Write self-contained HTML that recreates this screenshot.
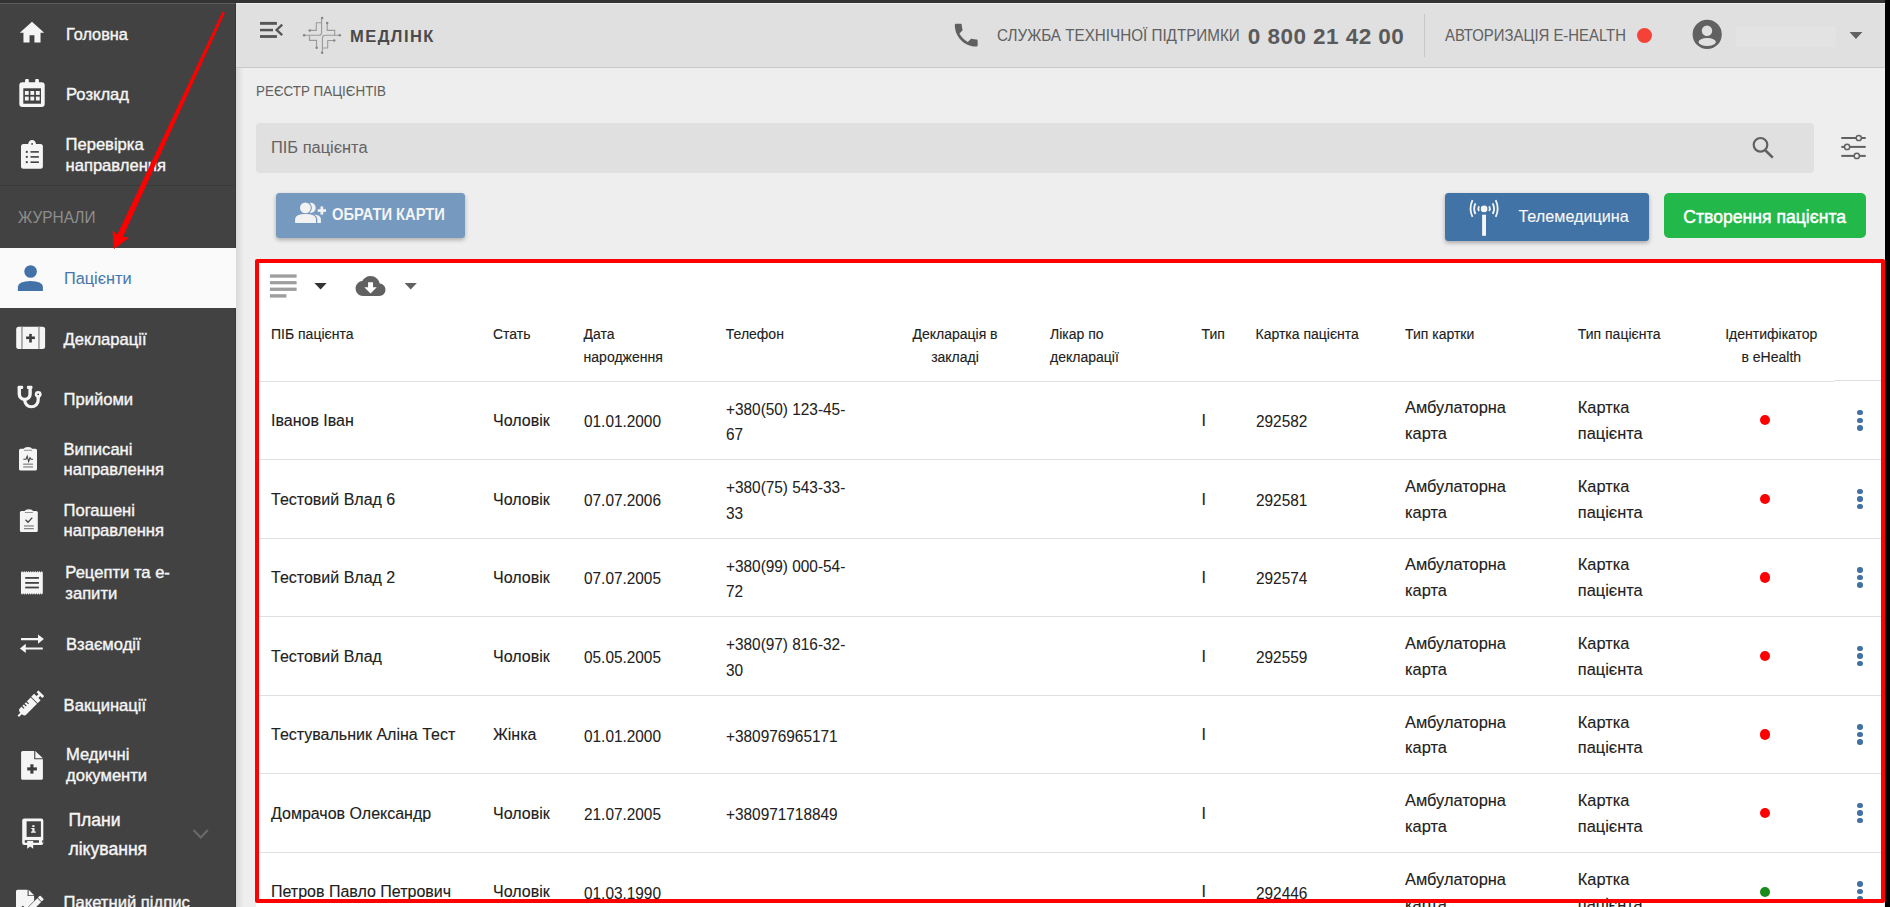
<!DOCTYPE html>
<html><head><meta charset="utf-8">
<style>
html,body{margin:0;padding:0;}
body{width:1890px;height:907px;overflow:hidden;position:relative;background:#eeeeee;font-family:"Liberation Sans",sans-serif;}
.t{position:absolute;white-space:nowrap;-webkit-text-stroke:0.12px currentColor;}
#top{position:absolute;left:0;top:0;width:1890px;height:3px;background:#333}
#sb{position:absolute;left:0;top:3px;width:236px;height:904px;background:#424242}
#hdr{position:absolute;left:236px;top:4px;width:1649px;height:63px;background:#e0e0e0;border-bottom:1px solid #c9c9c9}
#rb{position:absolute;left:1885px;top:0;width:5px;height:907px;background:#000}
</style></head><body>
<div id="top"></div>
<div id="hdr"></div>
<div id="sb">
<div style="position:absolute;left:0;top:0;width:236px;height:1px;background:#5e5e5e"></div>
<div style="position:absolute;left:235px;top:0;width:1px;height:904px;background:#393939"></div>
<div style="position:absolute;left:0;top:182px;width:235px;height:1px;background:#3a3a3a"></div>
</div>
<div class="t" style="left:66.00px;top:24.16px;font-size:16.3px;line-height:20.38px;color:#f5f5f5;-webkit-text-stroke:0.4px currentColor;">Головна</div>
<div class="t" style="left:66.00px;top:84.87px;font-size:16.6px;line-height:20.75px;color:#f5f5f5;-webkit-text-stroke:0.4px currentColor;">Розклад</div>
<div class="t" style="left:65.50px;top:134.87px;font-size:16.6px;line-height:20.75px;color:#f5f5f5;-webkit-text-stroke:0.4px currentColor;">Перевірка</div>
<div class="t" style="left:65.50px;top:155.87px;font-size:16.6px;line-height:20.75px;color:#f5f5f5;-webkit-text-stroke:0.4px currentColor;">направлення</div>
<div class="t" style="left:17.60px;top:206.97px;font-size:16.5px;line-height:20.62px;color:#8e8e8e;transform:scaleX(0.933);transform-origin:0 0;-webkit-text-stroke:0.05px currentColor;">ЖУРНАЛИ</div>
<div style="position:absolute;left:0;top:248px;width:236px;height:60px;background:#fafafa"></div>
<div class="t" style="left:64.00px;top:268.46px;font-size:16.3px;line-height:20.38px;color:#4677ab;-webkit-text-stroke:0.05px currentColor;">Пацієнти</div>
<div class="t" style="left:63.50px;top:329.87px;font-size:16.6px;line-height:20.75px;color:#f5f5f5;-webkit-text-stroke:0.4px currentColor;">Декларації</div>
<div class="t" style="left:63.50px;top:389.87px;font-size:16.6px;line-height:20.75px;color:#f5f5f5;-webkit-text-stroke:0.4px currentColor;">Прийоми</div>
<div class="t" style="left:63.50px;top:439.87px;font-size:16.6px;line-height:20.75px;color:#f5f5f5;-webkit-text-stroke:0.4px currentColor;">Виписані</div>
<div class="t" style="left:63.50px;top:459.87px;font-size:16.6px;line-height:20.75px;color:#f5f5f5;-webkit-text-stroke:0.4px currentColor;">направлення</div>
<div class="t" style="left:63.50px;top:500.87px;font-size:16.6px;line-height:20.75px;color:#f5f5f5;-webkit-text-stroke:0.4px currentColor;">Погашені</div>
<div class="t" style="left:63.50px;top:520.87px;font-size:16.6px;line-height:20.75px;color:#f5f5f5;-webkit-text-stroke:0.4px currentColor;">направлення</div>
<div class="t" style="left:65.30px;top:562.87px;font-size:16.6px;line-height:20.75px;color:#f5f5f5;-webkit-text-stroke:0.4px currentColor;">Рецепти та е-</div>
<div class="t" style="left:65.30px;top:583.87px;font-size:16.6px;line-height:20.75px;color:#f5f5f5;-webkit-text-stroke:0.4px currentColor;">запити</div>
<div class="t" style="left:66.00px;top:634.87px;font-size:16.6px;line-height:20.75px;color:#f5f5f5;-webkit-text-stroke:0.4px currentColor;">Взаємодії</div>
<div class="t" style="left:63.60px;top:695.87px;font-size:16.6px;line-height:20.75px;color:#f5f5f5;-webkit-text-stroke:0.4px currentColor;">Вакцинації</div>
<div class="t" style="left:66.00px;top:744.87px;font-size:16.6px;line-height:20.75px;color:#f5f5f5;-webkit-text-stroke:0.4px currentColor;">Медичні</div>
<div class="t" style="left:66.00px;top:765.87px;font-size:16.6px;line-height:20.75px;color:#f5f5f5;-webkit-text-stroke:0.4px currentColor;">документи</div>
<div class="t" style="left:68.40px;top:808.90px;font-size:17.6px;line-height:22.0px;color:#f5f5f5;-webkit-text-stroke:0.4px currentColor;">Плани</div>
<div class="t" style="left:68.40px;top:837.90px;font-size:17.6px;line-height:22.0px;color:#f5f5f5;-webkit-text-stroke:0.4px currentColor;">лікування</div>
<div class="t" style="left:63.60px;top:892.87px;font-size:16.6px;line-height:20.75px;color:#f5f5f5;-webkit-text-stroke:0.4px currentColor;">Пакетний підпис</div>
<div class="t" style="left:350.00px;top:25.57px;font-size:16.5px;line-height:20.62px;color:#4a4a4a;font-weight:700;letter-spacing:1.45px;-webkit-text-stroke:0px currentColor;">МЕДЛІНК</div>
<div class="t" style="left:996.70px;top:26.17px;font-size:16.6px;line-height:20.75px;color:#616161;transform:scaleX(0.917);transform-origin:0 0;-webkit-text-stroke:0.05px currentColor;">СЛУЖБА ТЕХНІЧНОЇ ПІДТРИМКИ</div>
<div class="t" style="left:1247.80px;top:23.04px;font-size:22.5px;line-height:28.12px;color:#5a5a5a;font-weight:700;letter-spacing:0.45px;-webkit-text-stroke:0px currentColor;">0 800 21 42 00</div>
<div style="position:absolute;left:1424px;top:14px;width:1px;height:43px;background:#c8c8c8"></div>
<div class="t" style="left:1444.80px;top:24.77px;font-size:16.4px;line-height:20.5px;color:#616161;transform:scaleX(0.908);transform-origin:0 0;-webkit-text-stroke:0.05px currentColor;">АВТОРИЗАЦІЯ E-HEALTH</div>
<div style="position:absolute;left:1636.7px;top:27.5px;width:15px;height:15px;border-radius:50%;background:#f44336"></div>
<div style="position:absolute;left:1736px;top:25.5px;width:100px;height:21.5px;background:#e3e3e3"></div>
<div style="position:absolute;left:236px;top:68px;width:8px;height:839px;background:linear-gradient(to right,rgba(0,0,0,0.09),rgba(0,0,0,0))"></div>
<div class="t" style="left:255.60px;top:81.34px;font-size:15.5px;line-height:19.38px;color:#606060;transform:scaleX(0.865);transform-origin:0 0;-webkit-text-stroke:0px currentColor;">РЕЄСТР ПАЦІЄНТІВ</div>
<div style="position:absolute;left:256px;top:123px;width:1558px;height:50px;background:#e0e0e0;border-radius:4px"></div>
<div class="t" style="left:271.00px;top:137.37px;font-size:16.4px;line-height:20.5px;color:#646464;-webkit-text-stroke:0.05px currentColor;">ПІБ пацієнта</div>
<div style="position:absolute;left:276px;top:193px;width:189px;height:44.5px;background:#7599bf;border-radius:3.5px;box-shadow:0 2px 4px rgba(0,0,0,.28)"></div>
<div class="t" style="left:331.80px;top:204.76px;font-size:16px;line-height:20.0px;color:#f4f4f4;font-weight:700;transform:scaleX(0.92);transform-origin:0 0;-webkit-text-stroke:0px currentColor;">ОБРАТИ КАРТИ</div>
<div style="position:absolute;left:1445px;top:193px;width:203.5px;height:47.5px;background:#4273a6;border-radius:3.5px;box-shadow:0 2px 4px rgba(0,0,0,.3)"></div>
<div class="t" style="left:1518.40px;top:206.46px;font-size:16.2px;line-height:20.25px;color:#f8f8f8;">Телемедицина</div>
<div style="position:absolute;left:1664px;top:193px;width:201.6px;height:45px;background:#22b84a;border-radius:5px"></div>
<div class="t" style="left:1683.30px;top:205.90px;font-size:17.6px;line-height:22.0px;color:#fff;-webkit-text-stroke:0.45px currentColor;">Створення пацієнта</div>
<div style="position:absolute;left:256px;top:260px;width:1628px;height:647px;background:#fff"></div>
<div class="t" style="left:271.00px;top:326.20px;font-size:14px;line-height:17.5px;color:#212121;">ПІБ пацієнта</div>
<div class="t" style="left:493.00px;top:326.20px;font-size:14px;line-height:17.5px;color:#212121;">Стать</div>
<div class="t" style="left:583.60px;top:326.20px;font-size:14px;line-height:17.5px;color:#212121;">Дата</div>
<div class="t" style="left:583.60px;top:348.90px;font-size:14px;line-height:17.5px;color:#212121;">народження</div>
<div class="t" style="left:725.80px;top:326.20px;font-size:14px;line-height:17.5px;color:#212121;">Телефон</div>
<div class="t" style="left:885.00px;width:140px;text-align:center;top:326.20px;font-size:14px;line-height:17.5px;color:#212121;">Декларація в</div>
<div class="t" style="left:885.00px;width:140px;text-align:center;top:348.90px;font-size:14px;line-height:17.5px;color:#212121;">закладі</div>
<div class="t" style="left:1050.00px;top:326.20px;font-size:14px;line-height:17.5px;color:#212121;">Лікар по</div>
<div class="t" style="left:1050.00px;top:348.90px;font-size:14px;line-height:17.5px;color:#212121;">декларації</div>
<div class="t" style="left:1201.60px;top:326.20px;font-size:14px;line-height:17.5px;color:#212121;">Тип</div>
<div class="t" style="left:1255.50px;top:326.20px;font-size:14px;line-height:17.5px;color:#212121;">Картка пацієнта</div>
<div class="t" style="left:1405.00px;top:326.20px;font-size:14px;line-height:17.5px;color:#212121;">Тип картки</div>
<div class="t" style="left:1577.80px;top:326.20px;font-size:14px;line-height:17.5px;color:#212121;">Тип пацієнта</div>
<div class="t" style="left:1701.30px;width:140px;text-align:center;top:326.20px;font-size:14px;line-height:17.5px;color:#212121;">Ідентифікатор</div>
<div class="t" style="left:1701.30px;width:140px;text-align:center;top:348.90px;font-size:14px;line-height:17.5px;color:#212121;">в eHealth</div>
<div style="position:absolute;left:259px;top:381px;width:1575px;height:1px;background:#e0e0e0"></div>
<div style="position:absolute;left:1834px;top:380px;width:47px;height:1px;background:#e0e0e0"></div>
<div class="t" style="left:271.00px;top:411.04px;font-size:16px;line-height:20.0px;color:#212121;">Іванов Іван</div>
<div class="t" style="left:493.00px;top:411.04px;font-size:16px;line-height:20.0px;color:#212121;">Чоловік</div>
<div class="t" style="left:583.60px;top:411.30px;font-size:16.2px;line-height:20.25px;color:#212121;transform:scaleX(0.95);transform-origin:0 0;-webkit-text-stroke:0.05px currentColor;">01.01.2000</div>
<div class="t" style="left:725.80px;top:398.75px;font-size:16.2px;line-height:20.25px;color:#212121;transform:scaleX(0.95);transform-origin:0 0;-webkit-text-stroke:0.05px currentColor;">+380(50) 123-45-</div>
<div class="t" style="left:725.80px;top:424.25px;font-size:16.2px;line-height:20.25px;color:#212121;transform:scaleX(0.95);transform-origin:0 0;-webkit-text-stroke:0.05px currentColor;">67</div>
<div class="t" style="left:1201.60px;top:411.04px;font-size:16px;line-height:20.0px;color:#212121;">І</div>
<div class="t" style="left:1255.50px;top:411.30px;font-size:16.2px;line-height:20.25px;color:#212121;transform:scaleX(0.95);transform-origin:0 0;-webkit-text-stroke:0.05px currentColor;">292582</div>
<div class="t" style="left:1405.00px;top:397.25px;font-size:16.4px;line-height:20.5px;color:#212121;">Амбулаторна</div>
<div class="t" style="left:1405.00px;top:422.95px;font-size:16.4px;line-height:20.5px;color:#212121;">карта</div>
<div class="t" style="left:1577.80px;top:397.25px;font-size:16.4px;line-height:20.5px;color:#212121;">Картка</div>
<div class="t" style="left:1577.80px;top:422.95px;font-size:16.4px;line-height:20.5px;color:#212121;">пацієнта</div>
<div style="position:absolute;left:1759.75px;top:415.13px;width:10.3px;height:10.3px;border-radius:50%;background:#ff0000"></div>
<div style="position:absolute;left:1857.25px;top:409.93px;width:5.5px;height:5.5px;border-radius:50%;background:#4271a6"></div>
<div style="position:absolute;left:1857.25px;top:417.53px;width:5.5px;height:5.5px;border-radius:50%;background:#4271a6"></div>
<div style="position:absolute;left:1857.25px;top:425.03px;width:5.5px;height:5.5px;border-radius:50%;background:#4271a6"></div>
<div style="position:absolute;left:259px;top:459px;width:1622px;height:1px;background:#e0e0e0"></div>
<div class="t" style="left:271.00px;top:489.61px;font-size:16px;line-height:20.0px;color:#212121;">Тестовий Влад 6</div>
<div class="t" style="left:493.00px;top:489.61px;font-size:16px;line-height:20.0px;color:#212121;">Чоловік</div>
<div class="t" style="left:583.60px;top:489.87px;font-size:16.2px;line-height:20.25px;color:#212121;transform:scaleX(0.95);transform-origin:0 0;-webkit-text-stroke:0.05px currentColor;">07.07.2006</div>
<div class="t" style="left:725.80px;top:477.32px;font-size:16.2px;line-height:20.25px;color:#212121;transform:scaleX(0.95);transform-origin:0 0;-webkit-text-stroke:0.05px currentColor;">+380(75) 543-33-</div>
<div class="t" style="left:725.80px;top:502.82px;font-size:16.2px;line-height:20.25px;color:#212121;transform:scaleX(0.95);transform-origin:0 0;-webkit-text-stroke:0.05px currentColor;">33</div>
<div class="t" style="left:1201.60px;top:489.61px;font-size:16px;line-height:20.0px;color:#212121;">І</div>
<div class="t" style="left:1255.50px;top:489.87px;font-size:16.2px;line-height:20.25px;color:#212121;transform:scaleX(0.95);transform-origin:0 0;-webkit-text-stroke:0.05px currentColor;">292581</div>
<div class="t" style="left:1405.00px;top:475.82px;font-size:16.4px;line-height:20.5px;color:#212121;">Амбулаторна</div>
<div class="t" style="left:1405.00px;top:501.52px;font-size:16.4px;line-height:20.5px;color:#212121;">карта</div>
<div class="t" style="left:1577.80px;top:475.82px;font-size:16.4px;line-height:20.5px;color:#212121;">Картка</div>
<div class="t" style="left:1577.80px;top:501.52px;font-size:16.4px;line-height:20.5px;color:#212121;">пацієнта</div>
<div style="position:absolute;left:1759.75px;top:493.71px;width:10.3px;height:10.3px;border-radius:50%;background:#ff0000"></div>
<div style="position:absolute;left:1857.25px;top:488.50px;width:5.5px;height:5.5px;border-radius:50%;background:#4271a6"></div>
<div style="position:absolute;left:1857.25px;top:496.11px;width:5.5px;height:5.5px;border-radius:50%;background:#4271a6"></div>
<div style="position:absolute;left:1857.25px;top:503.61px;width:5.5px;height:5.5px;border-radius:50%;background:#4271a6"></div>
<div style="position:absolute;left:259px;top:538px;width:1622px;height:1px;background:#e0e0e0"></div>
<div class="t" style="left:271.00px;top:568.18px;font-size:16px;line-height:20.0px;color:#212121;">Тестовий Влад 2</div>
<div class="t" style="left:493.00px;top:568.18px;font-size:16px;line-height:20.0px;color:#212121;">Чоловік</div>
<div class="t" style="left:583.60px;top:568.44px;font-size:16.2px;line-height:20.25px;color:#212121;transform:scaleX(0.95);transform-origin:0 0;-webkit-text-stroke:0.05px currentColor;">07.07.2005</div>
<div class="t" style="left:725.80px;top:555.89px;font-size:16.2px;line-height:20.25px;color:#212121;transform:scaleX(0.95);transform-origin:0 0;-webkit-text-stroke:0.05px currentColor;">+380(99) 000-54-</div>
<div class="t" style="left:725.80px;top:581.39px;font-size:16.2px;line-height:20.25px;color:#212121;transform:scaleX(0.95);transform-origin:0 0;-webkit-text-stroke:0.05px currentColor;">72</div>
<div class="t" style="left:1201.60px;top:568.18px;font-size:16px;line-height:20.0px;color:#212121;">І</div>
<div class="t" style="left:1255.50px;top:568.44px;font-size:16.2px;line-height:20.25px;color:#212121;transform:scaleX(0.95);transform-origin:0 0;-webkit-text-stroke:0.05px currentColor;">292574</div>
<div class="t" style="left:1405.00px;top:554.39px;font-size:16.4px;line-height:20.5px;color:#212121;">Амбулаторна</div>
<div class="t" style="left:1405.00px;top:580.09px;font-size:16.4px;line-height:20.5px;color:#212121;">карта</div>
<div class="t" style="left:1577.80px;top:554.39px;font-size:16.4px;line-height:20.5px;color:#212121;">Картка</div>
<div class="t" style="left:1577.80px;top:580.09px;font-size:16.4px;line-height:20.5px;color:#212121;">пацієнта</div>
<div style="position:absolute;left:1759.75px;top:572.27px;width:10.3px;height:10.3px;border-radius:50%;background:#ff0000"></div>
<div style="position:absolute;left:1857.25px;top:567.07px;width:5.5px;height:5.5px;border-radius:50%;background:#4271a6"></div>
<div style="position:absolute;left:1857.25px;top:574.67px;width:5.5px;height:5.5px;border-radius:50%;background:#4271a6"></div>
<div style="position:absolute;left:1857.25px;top:582.17px;width:5.5px;height:5.5px;border-radius:50%;background:#4271a6"></div>
<div style="position:absolute;left:259px;top:616px;width:1622px;height:1px;background:#e0e0e0"></div>
<div class="t" style="left:271.00px;top:646.75px;font-size:16px;line-height:20.0px;color:#212121;">Тестовий Влад</div>
<div class="t" style="left:493.00px;top:646.75px;font-size:16px;line-height:20.0px;color:#212121;">Чоловік</div>
<div class="t" style="left:583.60px;top:647.01px;font-size:16.2px;line-height:20.25px;color:#212121;transform:scaleX(0.95);transform-origin:0 0;-webkit-text-stroke:0.05px currentColor;">05.05.2005</div>
<div class="t" style="left:725.80px;top:634.46px;font-size:16.2px;line-height:20.25px;color:#212121;transform:scaleX(0.95);transform-origin:0 0;-webkit-text-stroke:0.05px currentColor;">+380(97) 816-32-</div>
<div class="t" style="left:725.80px;top:659.96px;font-size:16.2px;line-height:20.25px;color:#212121;transform:scaleX(0.95);transform-origin:0 0;-webkit-text-stroke:0.05px currentColor;">30</div>
<div class="t" style="left:1201.60px;top:646.75px;font-size:16px;line-height:20.0px;color:#212121;">І</div>
<div class="t" style="left:1255.50px;top:647.01px;font-size:16.2px;line-height:20.25px;color:#212121;transform:scaleX(0.95);transform-origin:0 0;-webkit-text-stroke:0.05px currentColor;">292559</div>
<div class="t" style="left:1405.00px;top:632.96px;font-size:16.4px;line-height:20.5px;color:#212121;">Амбулаторна</div>
<div class="t" style="left:1405.00px;top:658.66px;font-size:16.4px;line-height:20.5px;color:#212121;">карта</div>
<div class="t" style="left:1577.80px;top:632.96px;font-size:16.4px;line-height:20.5px;color:#212121;">Картка</div>
<div class="t" style="left:1577.80px;top:658.66px;font-size:16.4px;line-height:20.5px;color:#212121;">пацієнта</div>
<div style="position:absolute;left:1759.75px;top:650.85px;width:10.3px;height:10.3px;border-radius:50%;background:#ff0000"></div>
<div style="position:absolute;left:1857.25px;top:645.64px;width:5.5px;height:5.5px;border-radius:50%;background:#4271a6"></div>
<div style="position:absolute;left:1857.25px;top:653.25px;width:5.5px;height:5.5px;border-radius:50%;background:#4271a6"></div>
<div style="position:absolute;left:1857.25px;top:660.75px;width:5.5px;height:5.5px;border-radius:50%;background:#4271a6"></div>
<div style="position:absolute;left:259px;top:695px;width:1622px;height:1px;background:#e0e0e0"></div>
<div class="t" style="left:271.00px;top:725.32px;font-size:16px;line-height:20.0px;color:#212121;">Тестувальник Аліна Тест</div>
<div class="t" style="left:493.00px;top:725.32px;font-size:16px;line-height:20.0px;color:#212121;">Жінка</div>
<div class="t" style="left:583.60px;top:725.58px;font-size:16.2px;line-height:20.25px;color:#212121;transform:scaleX(0.95);transform-origin:0 0;-webkit-text-stroke:0.05px currentColor;">01.01.2000</div>
<div class="t" style="left:725.80px;top:725.58px;font-size:16.2px;line-height:20.25px;color:#212121;transform:scaleX(0.95);transform-origin:0 0;-webkit-text-stroke:0.05px currentColor;">+380976965171</div>
<div class="t" style="left:1201.60px;top:725.32px;font-size:16px;line-height:20.0px;color:#212121;">І</div>
<div class="t" style="left:1405.00px;top:711.53px;font-size:16.4px;line-height:20.5px;color:#212121;">Амбулаторна</div>
<div class="t" style="left:1405.00px;top:737.23px;font-size:16.4px;line-height:20.5px;color:#212121;">карта</div>
<div class="t" style="left:1577.80px;top:711.53px;font-size:16.4px;line-height:20.5px;color:#212121;">Картка</div>
<div class="t" style="left:1577.80px;top:737.23px;font-size:16.4px;line-height:20.5px;color:#212121;">пацієнта</div>
<div style="position:absolute;left:1759.75px;top:729.41px;width:10.3px;height:10.3px;border-radius:50%;background:#ff0000"></div>
<div style="position:absolute;left:1857.25px;top:724.21px;width:5.5px;height:5.5px;border-radius:50%;background:#4271a6"></div>
<div style="position:absolute;left:1857.25px;top:731.81px;width:5.5px;height:5.5px;border-radius:50%;background:#4271a6"></div>
<div style="position:absolute;left:1857.25px;top:739.31px;width:5.5px;height:5.5px;border-radius:50%;background:#4271a6"></div>
<div style="position:absolute;left:259px;top:773px;width:1622px;height:1px;background:#e0e0e0"></div>
<div class="t" style="left:271.00px;top:803.89px;font-size:16px;line-height:20.0px;color:#212121;">Домрачов Олександр</div>
<div class="t" style="left:493.00px;top:803.89px;font-size:16px;line-height:20.0px;color:#212121;">Чоловік</div>
<div class="t" style="left:583.60px;top:804.15px;font-size:16.2px;line-height:20.25px;color:#212121;transform:scaleX(0.95);transform-origin:0 0;-webkit-text-stroke:0.05px currentColor;">21.07.2005</div>
<div class="t" style="left:725.80px;top:804.15px;font-size:16.2px;line-height:20.25px;color:#212121;transform:scaleX(0.95);transform-origin:0 0;-webkit-text-stroke:0.05px currentColor;">+380971718849</div>
<div class="t" style="left:1201.60px;top:803.89px;font-size:16px;line-height:20.0px;color:#212121;">І</div>
<div class="t" style="left:1405.00px;top:790.10px;font-size:16.4px;line-height:20.5px;color:#212121;">Амбулаторна</div>
<div class="t" style="left:1405.00px;top:815.80px;font-size:16.4px;line-height:20.5px;color:#212121;">карта</div>
<div class="t" style="left:1577.80px;top:790.10px;font-size:16.4px;line-height:20.5px;color:#212121;">Картка</div>
<div class="t" style="left:1577.80px;top:815.80px;font-size:16.4px;line-height:20.5px;color:#212121;">пацієнта</div>
<div style="position:absolute;left:1759.75px;top:807.98px;width:10.3px;height:10.3px;border-radius:50%;background:#ff0000"></div>
<div style="position:absolute;left:1857.25px;top:802.78px;width:5.5px;height:5.5px;border-radius:50%;background:#4271a6"></div>
<div style="position:absolute;left:1857.25px;top:810.38px;width:5.5px;height:5.5px;border-radius:50%;background:#4271a6"></div>
<div style="position:absolute;left:1857.25px;top:817.88px;width:5.5px;height:5.5px;border-radius:50%;background:#4271a6"></div>
<div style="position:absolute;left:259px;top:852px;width:1622px;height:1px;background:#e0e0e0"></div>
<div class="t" style="left:271.00px;top:882.46px;font-size:16px;line-height:20.0px;color:#212121;">Петров Павло Петрович</div>
<div class="t" style="left:493.00px;top:882.46px;font-size:16px;line-height:20.0px;color:#212121;">Чоловік</div>
<div class="t" style="left:583.60px;top:882.72px;font-size:16.2px;line-height:20.25px;color:#212121;transform:scaleX(0.95);transform-origin:0 0;-webkit-text-stroke:0.05px currentColor;">01.03.1990</div>
<div class="t" style="left:1201.60px;top:882.46px;font-size:16px;line-height:20.0px;color:#212121;">І</div>
<div class="t" style="left:1255.50px;top:882.72px;font-size:16.2px;line-height:20.25px;color:#212121;transform:scaleX(0.95);transform-origin:0 0;-webkit-text-stroke:0.05px currentColor;">292446</div>
<div class="t" style="left:1405.00px;top:868.67px;font-size:16.4px;line-height:20.5px;color:#212121;">Амбулаторна</div>
<div class="t" style="left:1405.00px;top:894.37px;font-size:16.4px;line-height:20.5px;color:#212121;">карта</div>
<div class="t" style="left:1577.80px;top:868.67px;font-size:16.4px;line-height:20.5px;color:#212121;">Картка</div>
<div class="t" style="left:1577.80px;top:894.37px;font-size:16.4px;line-height:20.5px;color:#212121;">пацієнта</div>
<div style="position:absolute;left:1759.75px;top:886.55px;width:10.3px;height:10.3px;border-radius:50%;background:#1a8a1a"></div>
<div style="position:absolute;left:1857.25px;top:881.35px;width:5.5px;height:5.5px;border-radius:50%;background:#4271a6"></div>
<div style="position:absolute;left:1857.25px;top:888.95px;width:5.5px;height:5.5px;border-radius:50%;background:#4271a6"></div>
<div style="position:absolute;left:1857.25px;top:896.45px;width:5.5px;height:5.5px;border-radius:50%;background:#4271a6"></div>
<div style="position:absolute;left:255px;top:259px;width:1630px;height:644px;box-sizing:border-box;border:4px solid #ff0000;border-radius:2px"></div>
<svg id="ic" width="1890" height="907" viewBox="0 0 1890 907" style="position:absolute;left:0;top:0;pointer-events:none"><path transform="translate(17.35,18.14) scale(1.22)" d="M10 20v-6h4v6h5v-8h3L12 3 2 12h3v8z" fill="#f5f5f5"/><rect x="19.3" y="82.2" width="25.4" height="24.8" rx="3" fill="#f5f5f5"/><rect x="23.3" y="88.3" width="17.7" height="15.4" fill="#424242"/><rect x="25.1" y="79" width="3.7" height="5" rx="1" fill="#f5f5f5"/><rect x="35.2" y="79" width="3.7" height="5" rx="1" fill="#f5f5f5"/><rect x="24.9" y="91" width="3.8" height="3.9" fill="#f5f5f5"/><rect x="24.9" y="96.6" width="3.8" height="3.9" fill="#f5f5f5"/><rect x="30.4" y="91" width="3.8" height="3.9" fill="#f5f5f5"/><rect x="30.4" y="96.6" width="3.8" height="3.9" fill="#f5f5f5"/><rect x="35.9" y="91" width="3.8" height="3.9" fill="#f5f5f5"/><rect x="35.9" y="96.6" width="3.8" height="3.9" fill="#f5f5f5"/><rect x="21" y="143.9" width="21.9" height="24.9" rx="2.5" fill="#f5f5f5"/><path d="M28.1,145 A4,4 0 0 1 36,145 Z" fill="#f5f5f5"/><circle cx="32.1" cy="140.5" r="0" fill="#f5f5f5"/><path d="M28.2,144.5 Q28.5,140 32.1,140 Q35.7,140 36,144.5 Z" fill="#f5f5f5"/><circle cx="32.1" cy="143.9" r="0.9" fill="#424242"/><circle cx="26.8" cy="151.9" r="1.1" fill="#424242"/><rect x="30.5" y="151.1" width="8.4" height="1.6" fill="#424242"/><circle cx="26.8" cy="156.9" r="1.1" fill="#424242"/><rect x="30.5" y="156.1" width="8.4" height="1.6" fill="#424242"/><circle cx="26.8" cy="162.2" r="1.1" fill="#424242"/><rect x="30.5" y="161.39999999999998" width="8.4" height="1.6" fill="#424242"/><circle cx="30.6" cy="271.5" r="6.3" fill="#4272a8"/><path d="M17.9,290.9 V286.5 Q18.5,281 30.4,280.9 Q42.3,281 42.9,286.5 V290.9 Z" fill="#4272a8"/><rect x="16.2" y="326.8" width="28.9" height="22.1" rx="2.5" fill="#f5f5f5"/><rect x="21.2" y="326.8" width="1.5" height="22.1" fill="#999"/><rect x="38.2" y="326.8" width="1.5" height="22.1" fill="#999"/><rect x="26.1" y="336.5" width="8.8" height="2.6" fill="#3d3d3d"/><rect x="29.2" y="333.9" width="2.6" height="8.6" fill="#3d3d3d"/><path d="M19.3,387.5 V394 A5.4,5.4 0 0 0 30.1,394 V387.5" fill="none" stroke="#f5f5f5" stroke-width="3.4"/><rect x="17.6" y="385.8" width="5.6" height="3.2" rx="1.2" fill="#f5f5f5"/><rect x="26.9" y="385.8" width="5.6" height="3.2" rx="1.2" fill="#f5f5f5"/><path d="M24.7,398.5 V400 A6.75,6.75 0 0 0 38.2,400 V395" fill="none" stroke="#f5f5f5" stroke-width="3.2"/><circle cx="38.2" cy="394.3" r="3.4" fill="#f5f5f5"/><circle cx="38.2" cy="394.3" r="0.9" fill="#424242"/><rect x="19" y="448.8" width="18" height="21.80000000000001" rx="1.5" fill="#f5f5f5"/><path d="M23.6,449.3 Q24.5,447.0 28.0,447.0 Q31.5,447.0 32.4,449.3 Z" fill="#f5f5f5"/><rect x="24.0" y="449.8" width="8" height="0.9" fill="#888"/><path d="M23.3,459.3 H26 L27.2,456.2 L28.6,461.5 L30,457.8 L31,459.3 H33" fill="none" stroke="#424242" stroke-width="1.1"/><rect x="23.2" y="463.6" width="9.8" height="1.1" fill="#777"/><rect x="23.2" y="466.4" width="9.8" height="1.1" fill="#777"/><rect x="19.9" y="511" width="17.9" height="21" rx="1.5" fill="#f5f5f5"/><path d="M24.449999999999996,511.5 Q25.349999999999998,509.2 28.849999999999998,509.2 Q32.349999999999994,509.2 33.25,511.5 Z" fill="#f5f5f5"/><rect x="24.849999999999998" y="512" width="8" height="0.9" fill="#888"/><path d="M25.5,519.8 L28,522.3 L32.3,517.6" fill="none" stroke="#424242" stroke-width="1.3"/><rect x="24" y="525.4" width="9.8" height="1.1" fill="#777"/><rect x="24" y="528.1" width="9.8" height="1.1" fill="#777"/><path d="M21,572.5 L22.09,571 L23.18,572.5 L24.27,571 L25.36,572.5 L26.45,571 L27.54,572.5 L28.63,571 L29.72,572.5 L30.81,571 L31.90,572.5 L32.99,571 L34.08,572.5 L35.17,571 L36.26,572.5 L37.35,571 L38.44,572.5 L39.53,571 L40.62,572.5 L41.71,571 L42.80,572.5 L42.8,593.2 L41.71,594.7 L40.62,593.2 L39.53,594.7 L38.44,593.2 L37.35,594.7 L36.26,593.2 L35.17,594.7 L34.08,593.2 L32.99,594.7 L31.90,593.2 L30.81,594.7 L29.72,593.2 L28.63,594.7 L27.54,593.2 L26.45,594.7 L25.36,593.2 L24.27,594.7 L23.18,593.2 L22.09,594.7 L21.00,593.2 Z" fill="#f5f5f5"/><rect x="25.2" y="577.0" width="13.7" height="1.8" fill="#424242"/><rect x="25.2" y="582.0" width="13.7" height="1.8" fill="#424242"/><rect x="25.2" y="586.6" width="13.7" height="1.8" fill="#424242"/><path d="M21,638 H38 V634.4 L43.9,639.1 L38,643.7 V640.2 H21 Z" fill="#f5f5f5"/><path d="M42.8,647.4 H25.8 V643.8 L19.9,648.5 L25.8,653.1 V649.6 H42.8 Z" fill="#f5f5f5"/><g transform="translate(18.3,716.2) rotate(-45)"><rect x="0" y="-1" width="6" height="2" fill="#f5f5f5"/><path d="M6.5,-4.5 H22 V4.5 H6.5 Q3.8,4.5 3.8,0 Q3.8,-4.5 6.5,-4.5 Z" fill="#f5f5f5"/><rect x="22.8" y="-4.6" width="4.2" height="9.2" fill="#f5f5f5"/><rect x="26.5" y="-1.3" width="3.6" height="2.6" fill="#f5f5f5"/><rect x="29.8" y="-4.1" width="2.7" height="8.2" rx="0.5" fill="#f5f5f5"/><rect x="9" y="-4.8" width="1.2" height="3.3" fill="#424242"/><rect x="12.2" y="-4.8" width="1.2" height="3.3" fill="#424242"/><rect x="15.4" y="-4.8" width="1.2" height="3.3" fill="#424242"/></g><path d="M22.6,751.1 H34.2 V759.2 H42.9 V778.2 Q42.9,779.7 41.4,779.7 H22.6 Q21.1,779.7 21.1,778.2 V752.6 Q21.1,751.1 22.6,751.1 Z" fill="#f5f5f5"/><path d="M35.3,751.1 L42.9,758.2 H35.3 Z" fill="#f5f5f5"/><rect x="27.2" y="767.35" width="9.7" height="3.1" fill="#3d3d3d"/><rect x="30.35" y="764.3" width="3.1" height="9.3" fill="#3d3d3d"/><rect x="22.2" y="818.6" width="21.1" height="26.3" rx="2" fill="#f5f5f5"/><rect x="26.6" y="821.3" width="14.3" height="15.6" fill="#424242"/><rect x="24.8" y="840.2" width="14.1" height="2.5" fill="#424242"/><rect x="42.2" y="840.2" width="1.3" height="2.5" fill="#424242"/><path d="M27.2,841.1 H33.2 V848.8 L30.2,846.6 L27.2,848.8 Z" fill="#f5f5f5"/><rect x="32.3" y="825.2" width="2.2" height="1.8" fill="#f5f5f5"/><path d="M31.3,827.9 H34.5 V831.6 H35.8 V832.8 H31 V831.6 H32.3 V829 H31.3 Z" fill="#f5f5f5"/><path d="M193.5,830 L200.7,837.5 L207.9,830" fill="none" stroke="#6a6a6a" stroke-width="2"/><path d="M17.5,889.8 H27.6 V896.1 H34.1 V907 H16 V891.3 Q16,889.8 17.5,889.8 Z" fill="#f5f5f5"/><path d="M28.6,889.8 L34.1,895.2 H28.6 Z" fill="#f5f5f5"/><g transform="translate(31.7,907.5) rotate(-45)"><rect x="-2" y="-3" width="13.5" height="6" fill="#424242"/><rect x="-2" y="-2.6" width="12.6" height="5.4" fill="#f5f5f5"/><rect x="11.3" y="-2.6" width="3.2" height="5.4" rx="0.8" fill="#f5f5f5"/></g><circle cx="22.8" cy="906.8" r="1" fill="#424242"/><rect x="260" y="21.9" width="16.9" height="2.9" fill="#555"/><rect x="260" y="28.8" width="13" height="2.5" fill="#555"/><rect x="260" y="35.1" width="16.9" height="2.8" fill="#555"/><path d="M282.2,24.6 L276.6,29.9 L282.2,35.1" fill="none" stroke="#555" stroke-width="2.3"/><g fill="none" stroke="#9a9a9a" stroke-width="1.1"><path d="M321.6,18.1 V32.5 Q321.6,35.3 318.8,35.3 H304.1"/><path d="M322.4,52.8 V38.2 Q322.4,35.3 325.2,35.3 H339.8"/><path d="M321.6,22.7 H316.3 V30.4 H309.7"/><path d="M327.2,23 V30.4 H334.7 V35.3"/><path d="M322.4,48 H327.7 V40.5 H334.2"/><path d="M309.5,35.3 V40.4 H316.5 V47.7"/></g><circle cx="322.1" cy="18.1" r="1.25" fill="#868686"/><circle cx="322.1" cy="52.8" r="1.25" fill="#868686"/><circle cx="304.1" cy="35.3" r="1.25" fill="#868686"/><circle cx="339.8" cy="35.3" r="1.25" fill="#868686"/><circle cx="309.7" cy="30.4" r="1.25" fill="#868686"/><circle cx="327.2" cy="23" r="1.25" fill="#868686"/><circle cx="316.7" cy="47.7" r="1.25" fill="#868686"/><circle cx="334.2" cy="40.6" r="1.25" fill="#868686"/><path transform="translate(951,19.9) scale(1.27)" d="M6.62 10.79c1.44 2.83 3.76 5.14 6.59 6.59l2.2-2.2c.27-.27.67-.36 1.02-.24 1.12.37 2.33.57 3.57.57.55 0 1 .45 1 1V20c0 .55-.45 1-1 1-9.39 0-17-7.61-17-17 0-.55.45-1 1-1h3.5c.55 0 1 .45 1 1 0 1.25.2 2.45.57 3.57.11.35.03.74-.25 1.02l-2.2 2.2z" fill="#5f5f5f"/><path fill-rule="evenodd" fill="#616161" d="M1721.8,34.4 A14.6,14.6 0 1 1 1692.6,34.4 A14.6,14.6 0 1 1 1721.8,34.4 Z M1712.2,30.8 A5.2,5.2 0 1 0 1701.8,30.8 A5.2,5.2 0 1 0 1712.2,30.8 Z M1715.9,42 A8.7,4 0 1 0 1698.5,42 A8.7,4 0 1 0 1715.9,42 Z"/><path d="M1849.5,31.9 H1862.4 L1855.95,39 Z" fill="#616161"/><circle cx="1760.5" cy="144.8" r="6.8" fill="none" stroke="#616161" stroke-width="2.2"/><path d="M1765.5,150.5 L1772.8,157.6" stroke="#616161" stroke-width="2.6"/><rect x="1841.3" y="137" width="24.4" height="2" fill="#616161"/><circle cx="1858.8" cy="138" r="2.6" fill="#eeeeee" stroke="#616161" stroke-width="1.5"/><rect x="1841.3" y="145.9" width="24.4" height="2" fill="#616161"/><circle cx="1847.1" cy="146.9" r="2.6" fill="#eeeeee" stroke="#616161" stroke-width="1.5"/><rect x="1841.3" y="154.9" width="24.4" height="2" fill="#616161"/><circle cx="1856.8" cy="155.9" r="2.6" fill="#eeeeee" stroke="#616161" stroke-width="1.5"/><circle cx="310.6" cy="207.9" r="5.1" fill="#f2f2f2"/><circle cx="305.4" cy="207.9" r="6.5" fill="#7599bf"/><path d="M300.5,222.9 V219 Q301,214.6 311,214.6 Q320.9,214.6 320.9,219 V222.9 Z" fill="#f2f2f2"/><path d="M293.9,223.5 V219 Q294.3,213 305.5,213 Q316.9,213 317.3,219 V223.5 Z" fill="#7599bf"/><circle cx="305.4" cy="207.9" r="5.4" fill="#f2f2f2"/><path d="M295.1,222.9 V219 Q295.5,214.1 305.5,214.1 Q315.6,214.1 316,219 V222.9 Z" fill="#f2f2f2"/><rect x="317.7" y="209.2" width="8.3" height="2.7" fill="#f2f2f2"/><rect x="320.5" y="206.4" width="2.7" height="8.2" fill="#f2f2f2"/><circle cx="1484.1" cy="208.9" r="3.3" fill="#f5f5f5"/><rect x="1482.1" y="214.7" width="3.9" height="21.1" fill="#f5f5f5"/><g fill="none" stroke="#f5f5f5" stroke-width="1.8"><path d="M1479,206.2 Q1477.6,208.6 1479,211"/><path d="M1489.2,206.2 Q1490.6,208.6 1489.2,211"/><path d="M1475.5,203.3 Q1472.8,208.6 1475.5,214"/><path d="M1492.7,203.3 Q1495.4,208.6 1492.7,214"/><path d="M1472.5,200.1 Q1468.6,208.5 1472.5,216.9"/><path d="M1495.7,200.1 Q1499.6,208.5 1495.7,216.9"/></g><rect x="269.9" y="274.4" width="26.7" height="3.3" fill="#9e9e9e"/><rect x="269.9" y="281.1" width="26.7" height="3.2" fill="#9e9e9e"/><rect x="269.9" y="287.6" width="26.7" height="3.3" fill="#9e9e9e"/><rect x="269.9" y="294.2" width="16.5" height="3.4" fill="#9e9e9e"/><path d="M314.4,283.1 H326.7 L320.55,289.6 Z" fill="#333"/><path transform="translate(355.6,271) scale(1.245)" d="M19.35 10.04C18.67 6.59 15.64 4 12 4 9.11 4 6.6 5.64 5.35 8.04 2.34 8.36 0 10.91 0 14c0 3.31 2.69 6 6 6h13c2.76 0 5-2.24 5-5 0-2.64-2.05-4.78-4.65-4.96zM17 13l-5 5-5-5h3V9h4v4h3z" fill="#616161"/><path d="M404.6,283.1 H416.8 L410.7,289.6 Z" fill="#616161"/><path d="M114.3,248.3 L113.1,231 L117.42,235.44 L222.68,12.13 L224.32,12.87 L121.97,237.51 L128.3,237.8 Z" fill="#ff0000" stroke="#ff0000" stroke-width="1" stroke-linejoin="round"/></svg>
<div id="rb"></div>
</body></html>
